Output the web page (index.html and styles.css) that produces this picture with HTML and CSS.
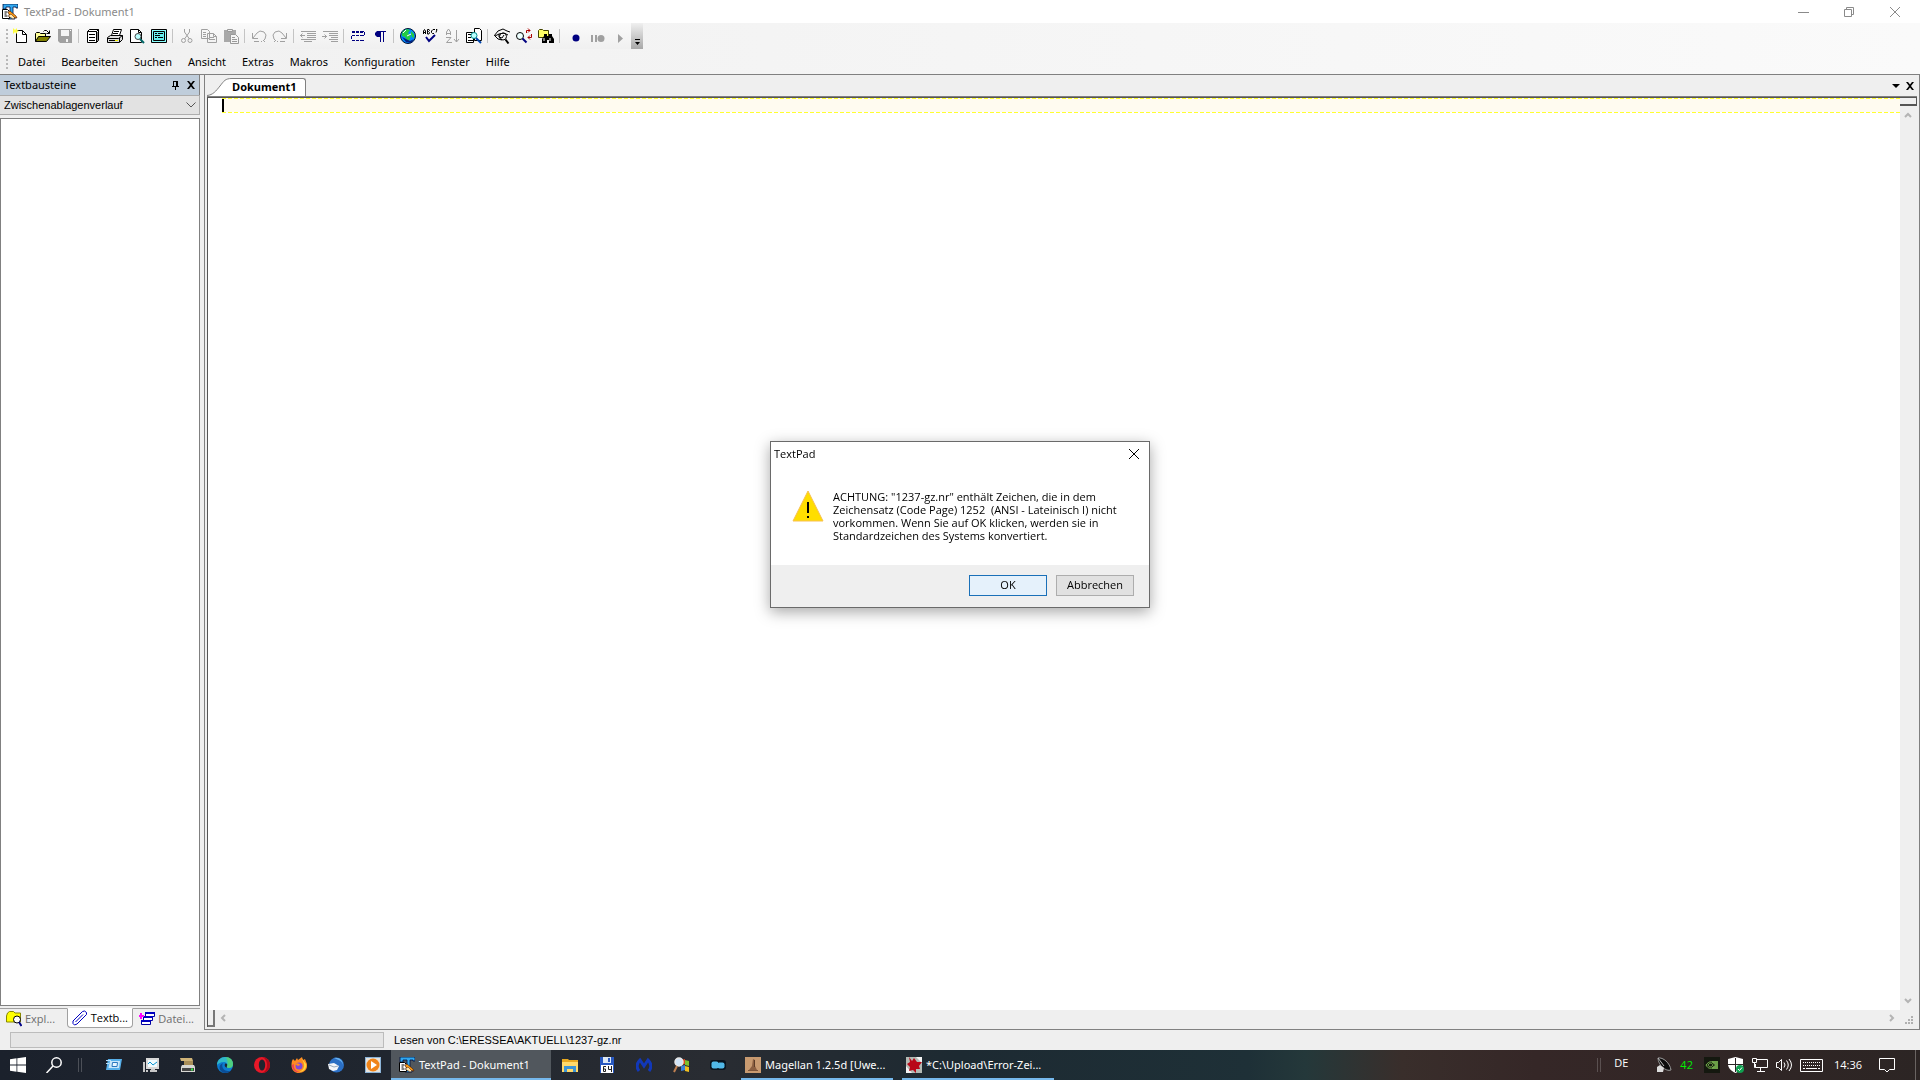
FILE: index.html
```html
<!DOCTYPE html>
<html lang="de">

<head>
    <meta charset="UTF-8">
    <title>TextPad - Dokument1</title>
    <meta name="viewport" content="width=device-width, initial-scale=1">
    <link rel="stylesheet" href="styles.css">
</head>

<body>
    <svg class="symbols" aria-hidden="true">
        <symbol id="textpad" viewBox="0 0 16 16">
            <path d="M1 0h15v4h-2V3h-3v10h2v2H6v-2h2V3H4v2H1z" fill="#30a8f0" stroke="#001040" stroke-width=".8" />
            <path d="M.5 5.500h5l2 2v7h-7z" fill="#fff" stroke="#000" />
            <path d="M2.500 8h3M2.500 10h2M2.500 12h3" stroke="#000" />
            <path d="M6 8l2-1 6 5 1 2-3-.5-5-3z" fill="#ff9c10" stroke="#401000" stroke-width=".6" />
            <path d="M6 12l3-2 4 4-2 1z" fill="#ffe8b0" stroke="#401000" stroke-width=".5" />
        </symbol>
        <symbol id="close" viewBox="0 0 10 10">
            <path d="M0 0l10 10M10 0L0 10" fill="none" stroke="currentColor" />
        </symbol>
        <symbol id="close-bold" viewBox="0 0 8 8">
            <path d="M0 0h2l2 2.500L6 0h2L5 4l3 4H6L4 5.500 2 8H0l3-4z" fill="currentColor" />
        </symbol>
        <symbol id="chevron" viewBox="0 0 10 6">
            <path d="M.5 .5l4.500 4.500L9.500.5" fill="none" stroke="currentColor" />
        </symbol>
        <symbol id="arrow" viewBox="0 0 8 8">
            <path d="M1 6l3-3 3 3" fill="none" stroke="currentColor" stroke-width="2" />
        </symbol>
    </svg>

    <header class="titlebar">
        <svg class="icon"><use href="#textpad" /></svg>
        <h1 class="titlebar__text">TextPad - Dokument1</h1>
        <button class="titlebar__btn" type="button" aria-label="Minimieren"><svg width="11" height="10"><path d="M0 5.500h11" stroke="currentColor" /></svg></button>
        <button class="titlebar__btn" type="button" aria-label="Wiederherstellen"><svg width="10" height="10" fill="none" stroke="currentColor"><path d="M.5 2.500h7v7h-7zM2.500 2.500v-2h7v7h-2" /></svg></button>
        <button class="titlebar__btn" type="button" aria-label="Schließen"><svg width="10" height="10"><use href="#close" /></svg></button>
    </header>

    <div class="bars">
        <div class="toolbar" role="toolbar" aria-label="Standard">
            <span class="grip"></span>
            <button type="button" aria-label="Neu"><svg class="icon" viewBox="0 0 16 16"><path d="M3.500 2.500h6l4 4v8h-10z" fill="#fff" stroke="#000" /><path d="M9.500 2.500v4h4" fill="none" stroke="#000" /><path d="M0 0l2 2 2-2v2l2 1-2 1v2L2 4 0 6V4l-1-1 1-1z" fill="#ff4" /></svg></button>
            <button type="button" aria-label="Öffnen"><svg class="icon" viewBox="0 0 16 16"><path d="M.5 13.500v-8l1-1h3l1 1h5v3" fill="#ff9" stroke="#000" /><path d="M.5 13.500l3-5h12l-4 5z" fill="#808000" stroke="#000" /><path d="M8.500 3.500l1-1h2l3 3M14.500 2.500v3h-3" fill="none" stroke="#000" /></svg></button>
            <button type="button" aria-label="Speichern" disabled><svg class="icon" viewBox="0 0 16 16"><path d="M1 1h14v14H3l-2-2z" fill="#a0a0a0" /><path d="M4 2h8v6H4zM9 11h2v3H9z" fill="#f4f4f4" /><path d="M13 2h1v1h-1z" fill="#fff" /></svg></button>
            <span class="sep"></span>
            <button type="button" aria-label="Dateien verwalten"><svg class="icon" viewBox="0 0 16 16"><path d="M2.500 3.500l2-2h9v11l-2 2h-9z" fill="#fff" stroke="#000" /><path d="M2.500 3.500h9v11M11.500 3.500l2-2" fill="none" stroke="#000" /><path d="M4 6.500h6M4 9.500h6M4 12.500h6" stroke="#000" /><path d="M12 4h1v9h-1z" fill="#888" /></svg></button>
            <button type="button" aria-label="Drucken"><svg class="icon" viewBox="0 0 16 16"><path d="M4.500 7.500l2-6h8l-2 6" fill="#fff" stroke="#000" /><path d="M7 3.500h5M6 5.500h5" stroke="#000" /><path d="M.5 9.500l3-2h12v4l-3 3h-12z" fill="#ddd" stroke="#000" /><path d="M.5 10.500h11l4-3M12.500 10v4M2 12.500h9" fill="none" stroke="#000" /><path d="M8 12h3v1H8z" fill="#ee0" /></svg></button>
            <button type="button" aria-label="Seitenansicht"><svg class="icon" viewBox="0 0 16 16"><path d="M1.500 1.500h8l3 3v10h-11z" fill="#fff" stroke="#000" /><path d="M9.500 1.500v3h3" fill="none" stroke="#000" /><circle cx="9" cy="8.500" r="3" fill="#bff" stroke="#444" /><path d="M11 11l4 4" stroke="#066" stroke-width="2" /></svg></button>
            <button type="button" aria-label="Eigenschaften"><svg class="icon" viewBox="0 0 16 16"><path d="M.5 1.500h15v13H.5z" fill="#8ff" stroke="#000" /><path d="M2.500 3.500h11v9h-11z" fill="#6ee" stroke="#000" /><path d="M4 5.500h2M7 5.500h5M4 7.500h5M4 9.500h2M7 9.500h5" stroke="#000" /></svg></button>
            <span class="sep"></span>
            <button type="button" aria-label="Ausschneiden" disabled><svg class="icon" viewBox="0 0 16 16" fill="none" stroke="currentColor"><path d="M5.500 1v3l5 7M10.500 1v3l-5 7" /><circle cx="4.500" cy="12.500" r="2" /><circle cx="11" cy="12.500" r="2" /></svg></button>
            <button type="button" aria-label="Kopieren" disabled><svg class="icon" viewBox="0 0 16 16" fill="none" stroke="currentColor"><path d="M.5 1.500h6l2 2v7h-8zM6.500 5.500h6l3 3v6h-9zM2 4.500h3M2 6.500h3M2 8.500h3M8 9.500h5M8 11.500h6M12.500 5.500v3h3" /></svg></button>
            <button type="button" aria-label="Einfügen" disabled><svg class="icon" viewBox="0 0 16 16"><path d="M1 2h12v12H1z" fill="#a8a8a8" /><path d="M4.500 1.500h5v2h-5z" fill="#eee" stroke="#999" /><path d="M7.500 6.500h5l3 3v6h-8z" fill="#f4f4f4" stroke="#999" /><path d="M9 9.500h3M9 11.500h5M9 13.500h5" stroke="#999" /></svg></button>
            <span class="sep"></span>
            <button type="button" aria-label="Rückgängig" disabled><svg class="icon" viewBox="0 0 16 16" fill="none" stroke="currentColor"><path d="M1.500 5v5.500H7M2 10l4-5 3-2 4 1 2 3-1 4-2 2M3 13.500h5M10 13.500h1M13 13.500h1" /></svg></button>
            <button type="button" aria-label="Wiederholen" disabled><svg class="icon" viewBox="0 0 16 16" fill="none" stroke="currentColor"><path d="M14.500 5v5.500H9M14 10l-4-5-3-2-4 1-2 3 1 4 2 2M13 13.500H8M6 13.500H5M3 13.500H2" /></svg></button>
            <span class="sep"></span>
            <button type="button" aria-label="Einzug verkleinern" disabled><svg class="icon" viewBox="0 0 16 16" fill="none" stroke="currentColor"><path d="M1 3.500h15M7 5.500h9M7 7.500h9M7 9.500h9M1 11.500h15M4 13.500h8M0 7.500h5M2.500 5.500l-2 2 2 2" /></svg></button>
            <button type="button" aria-label="Einzug vergrößern" disabled><svg class="icon" viewBox="0 0 16 16" fill="none" stroke="currentColor"><path d="M1 3.500h15M7 5.500h9M7 7.500h9M9 9.500h7M7 11.500h9M9 13.500h7M0 8.500h5M2.500 6.500l2 2-2 2" /></svg></button>
            <span class="sep"></span>
            <button type="button" aria-label="Zeilenumbruch"><svg class="icon" viewBox="0 0 16 16" fill="none" stroke="#000080"><path d="M2 3.500h3M6 3.500h3M10 3.500h4M2 7.500h3M6 7.500h3M10 7.500h4M14.500 4v3M1.500 8v3M2 12.500h3M6 12.500h3M10 12.500h4" /><path d="M2 4.500h3M6 4.500h3M10 4.500h3" /></svg></button>
            <button type="button" aria-label="Sichtbare Leerzeichen"><svg class="icon" viewBox="0 0 16 16"><path d="M5 3h9v1h-2v10h-1V4H9v10H8V9H5L3 7V5z" fill="#000080" /></svg></button>
            <span class="sep"></span>
            <button type="button" aria-label="Im Browser anzeigen"><svg class="icon" viewBox="0 0 16 16"><circle cx="8" cy="8" r="7.500" fill="#08f" stroke="#013" /><path d="M3 3l4-2 3 1-2 3 3 3-2 5H7L5 9 2 8V5zM11 3l3 3v4l-2-1-1-3z" fill="#2c4" /><path d="M2 9l4 5 5 1 3-4-4 2z" fill="#042080" /><path d="M3 5l3-3M7 8l4-2" stroke="#fff" /></svg></button>
            <button type="button" aria-label="Rechtschreibung"><svg class="icon" viewBox="0 0 16 16" fill="none" stroke="#000"><path d="M1.500 6V3l1-1.500L3.500 3v3M1 4.500h3M5.500 6V1.500H7l.5 1-1 1 1 1-.5 1.500zM13 1.500h-2L9.500 3v1.500l1 1H12M14 1.500h1l-1 3" /><path d="M4 9l3 4 6-6" stroke="#000080" stroke-width="2" /></svg></button>
            <button type="button" aria-label="Sortieren" disabled><svg class="icon" viewBox="0 0 16 16" fill="none" stroke="currentColor"><path d="M2.500 7V4l2-3 2 3v3M2.500 5.500h4M2 9.500h5L2.500 14.500H8M12.500 2v12M10 11l2.500 3 2.500-3" /></svg></button>
            <button type="button" aria-label="Dateien vergleichen"><svg class="icon" viewBox="0 0 16 16"><path d="M8.500.5h5l2 2v10h-7zM.5 4.500h7v10h-7z" fill="#fff" stroke="#000" /><path d="M2 6.500h4M2 9.500h3M2 12.500h5" stroke="#000" /><circle cx="8" cy="7.500" r="3" fill="#bff" stroke="#088" /><path d="M10 10l5 5" stroke="#04a" stroke-width="2" /></svg></button>
            <span class="sep"></span>
            <button type="button" aria-label="Suchen"><svg class="icon" viewBox="0 0 16 16" fill="none" stroke="#000"><path d="M0 8l4-5 5-2 4 2 3 1M1 8l4-2 5-1 4 2M1 8l3 3 4 1M5 6v3l3 1 2-3" /><circle cx="9" cy="8.500" r="3.500" /><path d="M11.500 11.500l3 4" stroke-width="2" /></svg></button>
            <button type="button" aria-label="Ersetzen"><svg class="icon" viewBox="0 0 16 16" fill="none"><circle cx="4" cy="8" r="3.500" fill="#eff" stroke="#000" /><path d="M6.500 10.500l4 4" stroke="#000080" stroke-width="2" /><path d="M10.500 5V2.500H14M12 .5l2 2-2 2M15.500 6v3.500H12M14 7.500l-2 2 2 2" stroke="#a00" /></svg></button>
            <button type="button" aria-label="In Dateien suchen"><svg class="icon" viewBox="0 0 16 16"><path d="M.5 2.500l1-1h3l1 1h5v7H.5z" fill="#ff6" stroke="#440" /><path d="M6 6h3v2h2V6h3v2l2 3v4h-5v-3h-2v3H4v-4l2-3z" fill="#000" /><path d="M6 10v3M12 10v3" stroke="#fff" /></svg></button>
            <span class="sep"></span>
            <span class="toolbar__macros">
                <button type="button" aria-label="Aufzeichnen"><svg class="icon" viewBox="0 0 16 16"><circle cx="8" cy="10" r="3.500" fill="#000080" /></svg></button>
                <button type="button" aria-label="Pause" disabled><svg class="icon" viewBox="0 0 16 16"><path d="M1 7h2v7H1zM5 7h2v7H5z" fill="currentColor" /><circle cx="11" cy="10.500" r="3.500" fill="currentColor" /></svg></button>
                <button type="button" aria-label="Abspielen" disabled><svg class="icon" viewBox="0 0 16 16"><path d="M6 6l5 4.500L6 15z" fill="currentColor" /></svg></button>
            </span>
            <button class="toolbar__more" type="button" aria-label="Weitere Schaltflächen"><svg width="5" height="6"><path d="M0 0h5v1H0zM0 3h5L2.500 6z" /></svg></button>
        </div>

        <nav class="menubar">
            <span class="grip"></span>
            <button type="button">Datei</button>
            <button type="button">Bearbeiten</button>
            <button type="button">Suchen</button>
            <button type="button">Ansicht</button>
            <button type="button">Extras</button>
            <button type="button">Makros</button>
            <button type="button">Konfiguration</button>
            <button type="button">Fenster</button>
            <button type="button">Hilfe</button>
        </nav>
    </div>

    <main class="workspace">
        <aside class="clips">
            <div class="clips__header">
                <h2 class="clips__title">Textbausteine</h2>
                <button type="button" aria-label="Anheften"><svg width="8" height="9"><path d="M2 0h5v5h1v1H5v3H4V6H1V5h1zM3 1v4h2V1z" fill-rule="evenodd" /></svg></button>
                <button type="button" aria-label="Schließen"><svg width="8" height="8"><use href="#close-bold" /></svg></button>
            </div>
            <div class="clips__select">
                <select aria-label="Sammlung">
                    <option>Zwischenablagenverlauf</option>
                </select>
                <svg class="clips__chevron" width="10" height="6"><use href="#chevron" /></svg>
            </div>
            <div class="clips__list"></div>
            <div class="clips__tabs" role="tablist">
                <button class="clips__tab" type="button" role="tab"><svg class="icon" viewBox="0 0 16 16"><path d="M.5 5l1-3 2-1.500h4L9 2h5.500v9H.5z" fill="#ff0" stroke="#880" /><circle cx="11" cy="8.500" r="3.500" fill="#fff" stroke="#000" /><path d="M13 11l2.500 4" stroke="#008" stroke-width="2" /></svg>Expl...</button>
                <button class="clips__tab clips__tab--active" type="button" role="tab" aria-selected="true"><svg class="icon" viewBox="0 0 16 16" fill="none" stroke="#0000c0"><path d="M1 13.500v-2.500L10.500 1.500l2-.5 2 1.500v2L5 14l-2.500 1zM3.500 12L11 4.500" /></svg>Textb...</button>
                <button class="clips__tab" type="button" role="tab"><svg class="icon" viewBox="0 0 16 16"><path d="M6.500 1.500h9v4h-9zM4.500 5.500h9v4h-9zM2.500 9.500h9v4h-9z" fill="#fff" stroke="#0000a0" /><path d="M6 1h10v2H6zM4 5h10v2H4zM2 9h10v2H2z" fill="#0000c0" /><path d="M2 2v6M0 5h5" stroke="#f0f" stroke-width="2" /></svg>Datei...</button>
            </div>
        </aside>

        <section class="document">
            <div class="document__tabs" role="tablist">
                <button class="document__tab" type="button" role="tab" aria-selected="true">
                    <svg width="25" height="18"><path d="M0 17.500C6 17 9 13 13 8S18 .5 25 .5V18H0z" fill="#fff" /><path d="M0 17.500C6 17 9 13 13 8S18 .5 25 .5" fill="none" stroke="#808080" /></svg>
                    <span class="document__name">Dokument1</span>
                </button>
                <button class="document__ctl" type="button" aria-label="Fensterliste"><svg width="8" height="4"><path d="M0 0h8L4 4z" /></svg></button>
                <button class="document__ctl" type="button" aria-label="Schließen"><svg width="8" height="8"><use href="#close-bold" /></svg></button>
            </div>
            <div class="editor">
                <div class="editor__page">
                    <textarea class="editor__text" aria-label="Dokument1" spellcheck="false"></textarea>
                    <span class="editor__caret"></span>
                </div>
                <div class="editor__vscroll">
                    <span class="editor__split"></span>
                    <button type="button" aria-label="Nach oben"><svg width="8" height="8"><use href="#arrow" /></svg></button>
                    <button class="flip" type="button" aria-label="Nach unten"><svg width="8" height="8"><use href="#arrow" /></svg></button>
                </div>
                <div class="editor__hscroll">
                    <span class="editor__hsplit"></span>
                    <button class="left" type="button" aria-label="Nach links"><svg width="8" height="8"><use href="#arrow" /></svg></button>
                    <button class="right" type="button" aria-label="Nach rechts"><svg width="8" height="8"><use href="#arrow" /></svg></button>
                </div>
                <svg class="editor__size" width="8" height="8"><path d="M6 0h2v2H6zM3 3h2v2H3zM6 3h2v2H6zM0 6h2v2H0zM3 6h2v2H3zM6 6h2v2H6z" fill="#b0b0b0" /></svg>
            </div>
        </section>
    </main>

    <footer class="statusbar">
        <span class="statusbar__progress"></span>
        <span>Lesen von C:\ERESSEA\AKTUELL\1237-gz.nr</span>
    </footer>

    <div class="taskbar">
        <button class="taskbar__btn" type="button" aria-label="Start"><svg class="icon" viewBox="0 0 16 16" fill="#fff"><path d="M0 2.200l6.500-.9v6.200H0zM7.300 1.200L16 0v7.500H7.300zM0 8.400h6.500v6.300L0 13.800zM7.300 8.400H16V16l-8.700-1.200z" /></svg></button>
        <button class="taskbar__btn" type="button" aria-label="Suche"><svg class="icon" viewBox="0 0 16 16" fill="none" stroke="#fff" stroke-width="1.500"><circle cx="10.500" cy="5.500" r="4.700" /><path d="M7 9l-6.500 7" /></svg></button>
        <span class="taskbar__sep"></span>
        <div class="taskbar__pins">
            <button class="taskbar__pin" type="button" aria-label="Ausführen"><svg class="icon" viewBox="0 0 16 16"><path d="M2 2h14l-2 11H0z" fill="#58b0ea" /><path d="M4 4h10l-1 7H2.500z" fill="#c8e6fa" /><path d="M6.500 5.500h5l-.5 4H6z" fill="#e8f6ff" stroke="#2a78c0" /><path d="M0 3.500h5M0 6.500h3" stroke="#b8e0fa" /></svg></button>
            <button class="taskbar__pin" type="button" aria-label="Systemmonitor"><svg class="icon" viewBox="0 0 16 16"><path d="M3 1h13v11H3z" fill="#d8d8d8" /><path d="M5 3h9v7H5z" fill="#f0fbff" /><path d="M5 7l2-2 3 3 4-3" fill="none" stroke="#0893d0" /><path d="M0 5h2v10H0zM3 13h2v2H3zM8 12h4v1h2v2H7v-2h1z" fill="#c8c8c8" /></svg></button>
            <button class="taskbar__pin" type="button" aria-label="Laufwerk"><svg class="icon" viewBox="0 0 16 16"><path d="M0 1h12l1 3H1z" fill="#d0b478" /><path d="M4 4h9v4H4z" fill="#a88e58" /><path d="M2 8h12l1 2v5H1v-5z" fill="#d8d8d4" /><path d="M2 11h12v3H2z" fill="#444" /><path d="M11 11.500h2v2h-2z" fill="#3e4" /></svg></button>
            <button class="taskbar__pin" type="button" aria-label="Edge"><svg class="icon" viewBox="0 0 16 16"><circle cx="8" cy="8" r="8" fill="#0c7bd0" /><path d="M0 8C0 3 4 0 8 0c5 0 8 3 8 7 0 3-2 4-4 4s-3-1-2-2c1-2-1-4-3-4-4 0-6 2-7 3z" fill="#30b8c8" /><path d="M9 0c4 0 7 3 7 7 0 3-2 4-4 4s-3-1-2-2c1-2 1-5-1-9z" fill="#5cd860" opacity=".7" /><path d="M6 6c-2 3 0 8 5 8 2 0 3 0 4-2-2 4-7 5-10 3S1 8 6 6z" fill="#0b4d96" /><path d="M8 7c1-1 3 0 2 2s0 2 1 2c-2 0-4-2-3-4z" fill="#1c2430" /></svg></button>
            <button class="taskbar__pin" type="button" aria-label="Opera"><svg class="icon" viewBox="0 0 16 16"><circle cx="8" cy="8" r="8" fill="#e81828" /><path d="M8 0a8 8 0 0 1 0 16c3-1 5-4 5-8S11 1 8 0z" fill="#b00818" /><ellipse cx="8" cy="8" rx="3.200" ry="5.600" fill="#20242e" /></svg></button>
            <button class="taskbar__pin" type="button" aria-label="Firefox"><svg class="icon" viewBox="0 0 16 16"><path d="M1 4l1-2 2 2 2-3 1 2 4-3 1 3 2-1 2 5c1 5-3 9-8 9S-1 12 1 4z" fill="#ff8a20" /><path d="M10 1l2 2 3 4c1 5-3 8-7 8 6-2 7-8 2-14z" fill="#ffd83a" /><path d="M1 8c0 5 4 8 8 7-4 0-7-4-6-8z" fill="#f03858" /><circle cx="8" cy="9" r="3.500" fill="#8048d8" /><path d="M4 7c3-2 5 0 5 1L7 9z" fill="#ff8a20" /></svg></button>
            <button class="taskbar__pin" type="button" aria-label="Thunderbird"><svg class="icon" viewBox="0 0 16 16"><circle cx="8.500" cy="8" r="7.500" fill="#2b6fc4" /><path d="M6 1c5-1 9 2 9 7-1-4-4-5-9-7z" fill="#6ab4f0" /><path d="M0 7l6-1 5 3-2 4-4 1-4-2z" fill="#f4f6fa" /><path d="M1 8l5 2 4-1" fill="none" stroke="#9ab" /></svg></button>
            <button class="taskbar__pin" type="button" aria-label="Media Player"><svg class="icon" viewBox="0 0 16 16"><path d="M0 0h16v16H0z" fill="#8cb4d8" /><path d="M1 1h14v14H1z" fill="#e8e4dc" /><circle cx="8" cy="8" r="6.500" fill="#f08418" /><path d="M6 4l6 4-6 4z" fill="#fff" /></svg></button>
        </div>
        <button class="taskbar__task taskbar__task--active" type="button"><svg class="icon"><use href="#textpad" /></svg>TextPad - Dokument1</button>
        <div class="taskbar__pins">
            <button class="taskbar__pin" type="button" aria-label="Explorer"><svg class="icon" viewBox="0 0 16 16"><path d="M0 2h6l1 1h9v12H0z" fill="#e8a820" /><path d="M0 5h16v10H0z" fill="#ffd96a" /><path d="M2 9h12v6h-3v-3H5v3H2z" fill="#3c94d4" /></svg></button>
            <button class="taskbar__pin" type="button" aria-label="Commander"><svg class="icon" viewBox="0 0 16 16"><path d="M1 0h14v16H1z" fill="#2858c0" /><path d="M4 0h8v6H4z" fill="#dde8f4" /><path d="M9 1h2v4H9z" fill="#2858c0" /><path d="M2 8h12v8H2z" fill="#fff" /><path d="M7 9.500H4.500v5h2v-2.500h-2M9.500 9v3.500h3M12.500 9v6" fill="none" stroke="#222" /></svg></button>
            <button class="taskbar__pin" type="button" aria-label="Malwarebytes"><svg class="icon" viewBox="0 0 16 16"><path d="M3 14C0 10 1 6 4 3l4 6 4-6c3 3 4 7 1 11" fill="none" stroke="#1238b8" stroke-width="3" /></svg></button>
            <button class="taskbar__pin" type="button" aria-label="Systemsteuerung"><svg class="icon" viewBox="0 0 16 16"><path d="M8 3l4-1v5l-4 1z" fill="#e04820" /><path d="M12 3l4 1v5l-4-1z" fill="#7cc030" /><path d="M8 9l4-1v5l-4 1z" fill="#3a80d8" /><path d="M12 9l4 1v5l-4-1z" fill="#f0c020" /><circle cx="6" cy="5" r="4" fill="#cfe4f8" stroke="#e8e8e8" stroke-width="1.500" /><path d="M4 9l-3 6" stroke="#c08050" stroke-width="2" /></svg></button>
            <button class="taskbar__pin" type="button" aria-label="Verbindung"><svg class="icon" viewBox="0 0 16 16"><rect x="0" y="3" width="16" height="10" rx="3" fill="#08131e" /><rect x="1.500" y="4.500" width="7" height="7" rx="2" fill="#50b8e8" /><rect x="7.500" y="5.500" width="7" height="6" rx="2" fill="#50b8e8" /></svg></button>
        </div>
        <button class="taskbar__task taskbar__task--first" type="button"><svg class="icon" viewBox="0 0 16 16"><path d="M0 0h16v16H0z" fill="#c89a70" /><path d="M8 2l2 1v6l2 4H4l3-4z" fill="#8a5e40" /><path d="M3 13.500h10" stroke="#7c543a" /><path d="M9.500 3v7" stroke="#5c3c28" /></svg>Magellan 1.2.5d [Uwe...</button>
        <button class="taskbar__task" type="button"><svg class="icon" viewBox="0 0 16 16"><path d="M0 0h16v16H0z" fill="#b4bab4" /><path d="M0 9l6 7H0zM10 0h6v6z" fill="#f4f4f4" /><path d="M3 0l3 4 2-3 3 4 5 0-3 4 1 3-4 0 0 4-3-3-4 1 1-4-3-3 3-2z" fill="#b80818" /></svg>*C:\Upload\Error-Zei...</button>

        <div class="tray">
            <span class="taskbar__sep"></span>
            <span class="tray__lang">DE</span>
            <svg class="icon" viewBox="0 0 16 16"><path d="M2 1c5-1 12 5 13 12-5 2-13-5-13-12z" fill="#0c0c0c" stroke="#999" /><path d="M1 10l3-2 4 3-1 4H1z" fill="#ddd" /><path d="M2 1l6 8" stroke="#bbb" /></svg>
            <span class="tray__temp">42</span>
            <svg class="icon" viewBox="0 0 16 16"><path d="M0 0h16v16H0z" fill="#14180f" /><path d="M8 4h6v8H8v-1.500l3-2.500-3-2.500z" fill="#6ca048" /><path d="M2 8c3-4 6-4 8-2M4 8c2-3 4-2 5 0-2 3-4 2-5 0zM2 8c2 4 5 4 8 2" fill="none" stroke="#7ab850" /></svg>
            <svg class="icon" viewBox="0 0 16 16"><path d="M7.500 0L15 2v5c0 4-3 7-7.500 9C3 14 0 11 0 7V2z" fill="#fff" /><path d="M7.500 1v14M0 7.500h15" stroke="#2a2526" /><circle cx="12" cy="12" r="4" fill="#10a050" /><path d="M10 12l1.500 1.500L14 10.500" fill="none" stroke="#fff" /></svg>
            <svg class="icon" viewBox="0 0 16 16" fill="none" stroke="#fff"><path d="M5 2.500h10.500v8H3.500V7M8.500 10.500v4M5 14.500h8M.5 1.500h4v4h-4zM2.500 5.500v5h1" /></svg>
            <svg class="icon" viewBox="0 0 16 16" fill="none" stroke="#fff"><path d="M.5 5.500h2l3-3v11l-3-3h-2zM8 5.500q2 2.500 0 5M10.500 3.500q3.500 4.500 0 9M13 2q5 6 0 12" /></svg>
            <svg width="23" height="13" fill="none" stroke="#fff"><path d="M.5.5h22v12H.5z" /><path d="M3 3.500h17M3 6.500h17" stroke-dasharray="1 1" /><path d="M3 9.500h2M6 9.500h11M18 9.500h2" /></svg>
            <time class="tray__time">14:36</time>
            <button class="tray__notes" type="button" aria-label="Benachrichtigungen"><svg class="icon" viewBox="0 0 16 16" fill="none" stroke="#fff"><path d="M.5 1.500h15v11h-5L8 15l-2.500-2.500h-5z" /></svg></button>
            <button class="tray__desktop" type="button" aria-label="Desktop anzeigen"></button>
        </div>
    </div>

    <div class="overlay">
        <section class="dialog" role="alertdialog" aria-labelledby="dialog-title" aria-describedby="dialog-text">
            <div class="dialog__header">
                <h2 class="dialog__title" id="dialog-title">TextPad</h2>
                <button class="dialog__close" type="button" aria-label="Schließen"><svg width="10" height="10"><use href="#close" /></svg></button>
            </div>
            <div class="dialog__body">
                <svg width="32" height="32" viewBox="0 0 32 32"><path d="M16 1l15 30H1z" fill="#ffde00" stroke="#f8c050" stroke-linejoin="round" /><path d="M15 12h2v11h-2zM15 26h2v2h-2z" /></svg>
                <p class="dialog__text" id="dialog-text">ACHTUNG: "1237-gz.nr" enthält Zeichen, die in dem<br>Zeichensatz (Code Page) 1252&nbsp; (ANSI - Lateinisch I) nicht<br>vorkommen. Wenn Sie auf OK klicken, werden sie in<br>Standardzeichen des Systems konvertiert.</p>
            </div>
            <div class="dialog__footer">
                <button class="btn btn--default" type="button">OK</button>
                <button class="btn" type="button">Abbrechen</button>
            </div>
        </section>
    </div>
</body>

</html>
```
FILE: styles.css
```css
* {
    box-sizing: border-box;
    margin: 0;
    padding: 0;
}

:root {
    --face: #efefef;
    --line: #808080;
    --disabled: #a0a0a0;
    --ui: 11px/16px "Open Sans", "Noto Sans", sans-serif;
}

body {
    background: var(--face);
    color: #000;
    display: flex;
    flex-direction: column;
    font: var(--ui);
    height: 100vh;
    overflow: hidden;
}

button {
    align-items: center;
    background: none;
    border: 0;
    color: inherit;
    display: flex;
    font: inherit;
    justify-content: center;
}

button:disabled {
    color: var(--disabled);
}

svg {
    display: block;
    flex-shrink: 0;
}

h1,
h2 {
    font: inherit;
}

.symbols {
    display: none;
}

.icon {
    height: 16px;
    width: 16px;
}

/* Title bar */
.titlebar {
    align-items: center;
    background: #fff;
    color: #8a8a8a;
    display: flex;
    font-family: "Noto Sans", sans-serif;
    height: 23px;
    padding: 0 2px;
}

.titlebar__text {
    flex: 1;
    padding-left: 6px;
}

.titlebar__btn {
    height: 20px;
    width: 46px;
}

/* Toolbar and menu */
.bars {
    background: linear-gradient(to right, #f0f0f0, #fafafa);
    border-bottom: 1px solid var(--line);
    height: 52px;
}

.toolbar {
    align-items: center;
    background: linear-gradient(to bottom, #fafafa, #f0f0f0);
    display: flex;
    height: 26px;
    padding-left: 6px;
    width: 643px;
}

.toolbar button {
    height: 22px;
    width: 22px;
}

.toolbar .sep {
    border-left: 1px solid #c4c4c4;
    height: 14px;
    margin: 0 3px 0 2px;
}

.grip {
    background: repeating-linear-gradient(to bottom, #b8b8b8 0 2px, transparent 2px 4px);
    height: 14px;
    margin-right: 2px;
    width: 2px;
}

.toolbar__macros {
    display: flex;
    margin-left: 2px;
}

.toolbar .toolbar__more {
    align-items: flex-end;
    background: linear-gradient(to bottom, #f0f0f0, #a8a8a8);
    height: 26px;
    margin-left: auto;
    padding-bottom: 4px;
    width: 12px;
}

.menubar {
    align-items: center;
    display: flex;
    font-family: "Noto Sans", sans-serif;
    height: 25px;
    padding-left: 6px;
}

.menubar button {
    height: 22px;
    padding: 0 8px;
}

/* Clip library */
.workspace {
    display: flex;
    flex: 1;
    gap: 4px;
    min-height: 0;
}

.clips {
    display: flex;
    flex-direction: column;
    width: 200px;
}

.clips__header {
    align-items: center;
    background: #bfcddb;
    border-right: 1px solid var(--line);
    display: flex;
    height: 20px;
}

.clips__title {
    flex: 1;
    font-family: "Noto Sans", sans-serif;
    padding-left: 4px;
}

.clips__header button {
    height: 16px;
    width: 16px;
}

.clips__select {
    position: relative;
}

.clips__select select {
    appearance: none;
    background: #e2e2e2;
    border: 1px solid #adadad;
    border-left: 0;
    border-radius: 0;
    color: #000;
    display: block;
    font: 11px/16px "Liberation Sans", sans-serif;
    height: 20px;
    padding-left: 4px;
    width: 100%;
}

.clips__chevron {
    color: #555;
    pointer-events: none;
    position: absolute;
    right: 4px;
    top: 7px;
}

.clips__list {
    background: #fff;
    border: 1px solid var(--line);
    flex: 1;
    margin-top: 3px;
}

.clips__tabs {
    display: flex;
    margin: 2px 0;
}

.clips__tab {
    border-top: 1px solid #a0a0a0;
    color: #6d6d6d;
    flex: 1;
    gap: 3px;
    height: 20px;
    justify-content: flex-start;
    padding-left: 6px;
}

.clips__tab--active {
    background: #fff;
    border: 1px solid #a0a0a0;
    border-radius: 0 0 4px 4px;
    border-top-color: #fff;
    color: #000;
    padding-left: 4px;
}

/* Document window */
.document {
    border: 1px solid var(--line);
    border-top: 0;
    display: flex;
    flex: 1;
    flex-direction: column;
    min-width: 0;
    padding: 0 2px 2px;
}

.document__tabs {
    align-items: center;
    border-bottom: 1px solid var(--line);
    display: flex;
    height: 22px;
}

.document__tab {
    align-self: flex-end;
    height: 18px;
    margin-right: auto;
}

.document__name {
    background: #fff;
    border: 1px solid var(--line);
    border-radius: 0 3px 0 0;
    border-width: 1px 1px 0 0;
    font-weight: 700;
    height: 18px;
    padding-right: 8px;
}

.document__ctl {
    height: 16px;
    width: 14px;
}

.editor {
    border-left: 1px solid #555;
    border-top: 1px solid #555;
    display: grid;
    flex: 1;
    grid-template: 1fr 17px / 1fr 17px;
    min-height: 0;
}

.editor__page {
    background: #fff;
    position: relative;
}

.editor__text {
    background:
        repeating-linear-gradient(to right, #ffff30 0 4px, transparent 4px 6px) 0 0 / 100% 1px no-repeat,
        repeating-linear-gradient(to right, #ffff30 0 4px, transparent 4px 6px) 0 14px / 100% 1px no-repeat,
        linear-gradient(#fffbf0, #fffbf0) 0 0 / 100% 14px no-repeat;
    border: 0;
    display: block;
    font: 12px/14px "Liberation Mono", monospace;
    height: 100%;
    margin-left: 14px;
    outline: 0;
    resize: none;
    width: calc(100% - 14px);
}

.editor__caret {
    background: #000;
    height: 13px;
    left: 14px;
    position: absolute;
    top: 1px;
    width: 2px;
}

.editor__vscroll,
.editor__hscroll {
    color: #b4b4b4;
    display: flex;
    justify-content: space-between;
}

.editor__vscroll {
    flex-direction: column;
}

.editor__vscroll button {
    height: 18px;
    width: 15px;
}

.editor__vscroll button:nth-child(2) {
    margin-bottom: auto;
}

.editor__split {
    border: solid #555;
    border-width: 0 1px 2px 0;
    height: 8px;
}

.editor__hsplit {
    border: solid #777;
    border-width: 0 2px 2px 0;
    width: 7px;
}

.editor__hscroll button {
    height: 16px;
    width: 16px;
}

.editor__hscroll .left {
    margin-right: auto;
}

.flip svg {
    transform: rotate(180deg);
}

.left svg {
    transform: rotate(-90deg);
}

.right svg {
    transform: rotate(90deg);
}

.editor__size {
    align-self: end;
    justify-self: center;
    margin-bottom: 3px;
}

/* Status bar */
.statusbar {
    align-items: center;
    display: flex;
    font: 11px/16px "Liberation Sans", sans-serif;
    gap: 10px;
    height: 20px;
    padding-left: 10px;
}

.statusbar__progress {
    background: #e6e6e6;
    border: 1px solid #bcbcbc;
    height: 16px;
    width: 374px;
}

/* Task bar */
.taskbar {
    align-items: center;
    background: linear-gradient(to right, #1b212c 0%, #20262f 20%, #292c32 37%, #1d2a32 50%, #1e3037 65%, #24383a 68%, #392e2b 73%, #352727 80%, #2c2524 100%);
    color: #fff;
    display: flex;
    font-family: "Noto Sans", sans-serif;
    height: 30px;
}

.taskbar__btn {
    height: 30px;
    width: 36px;
}

.taskbar__sep {
    border: solid #4c5058;
    border-width: 0 1px;
    height: 14px;
    margin: 0 13px 0 6px;
    width: 4px;
}

.taskbar__pins {
    display: flex;
}

.taskbar__pin {
    height: 30px;
    width: 37px;
}

.taskbar__task {
    border-bottom: 2px solid #76b9ed;
    gap: 4px;
    height: 30px;
    justify-content: flex-start;
    margin-right: 9px;
    padding: 2px 4px 0;
    white-space: nowrap;
    width: 152px;
}

.taskbar__task--active {
    background: #51575d;
    margin-right: 0;
    padding-left: 8px;
    width: 160px;
}

.taskbar__task--first {
    margin-left: 5px;
}

.tray {
    align-items: center;
    display: flex;
    font-family: "Open Sans", sans-serif;
    gap: 8px;
    height: 30px;
    margin-left: auto;
}

.tray .taskbar__sep {
    border-color: #5a5050;
    margin: 0 5px 0 0;
}

.tray__lang {
    margin-right: 20px;
    padding-bottom: 4px;
}

.tray__temp {
    color: #00f000;
    margin-right: 3px;
}

.tray__time {
    margin: 0 9px 0 3px;
}

.tray__notes {
    height: 30px;
    margin-right: 10px;
}

.tray__desktop {
    border-left: 1px solid #6a6462;
    height: 30px;
    margin-left: 2px;
    width: 5px;
}

/* Message box, centred above the task bar */
.overlay {
    display: grid;
    inset: 0 0 32px;
    place-items: center;
    position: fixed;
}

.dialog {
    background: #fff;
    border: 1px solid #6a6a6a;
    box-shadow: 0 4px 14px rgba(0, 0, 0, 0.35);
    width: 380px;
}

.dialog__header {
    align-items: center;
    display: flex;
    height: 24px;
    justify-content: space-between;
    padding: 0 10px 0 3px;
}

.dialog__close {
    height: 20px;
    width: 10px;
}

.dialog__body {
    display: flex;
    gap: 9px;
    height: 99px;
    padding: 24px 21px 0;
}

.dialog__text {
    line-height: 13px;
    white-space: nowrap;
}

.dialog__footer {
    background: var(--face);
    display: flex;
    gap: 9px;
    height: 42px;
    justify-content: flex-end;
    padding: 10px 15px;
}

.btn {
    background: #e1e1e1;
    border: 1px solid #adadad;
    height: 21px;
    width: 78px;
}

.btn--default {
    background: #e5f1fb;
    border-color: #1a70b8;
}
```
